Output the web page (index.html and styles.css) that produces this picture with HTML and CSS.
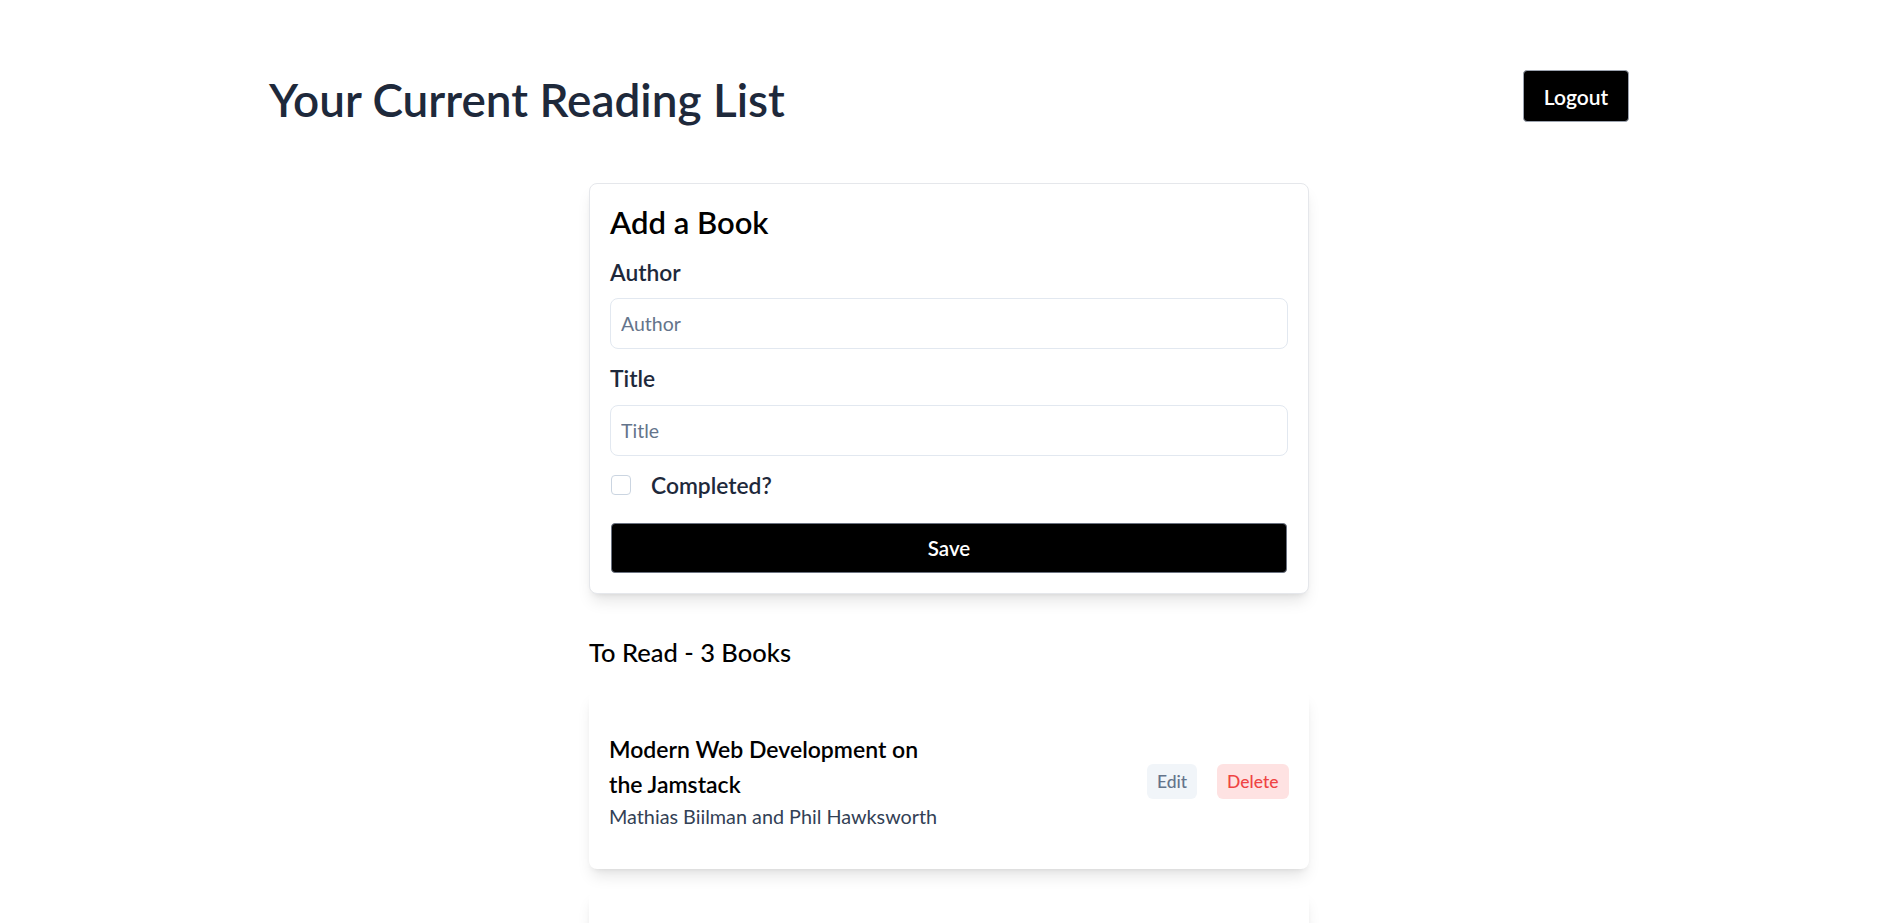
FILE: index.html
```html
<!DOCTYPE html>
<html lang="en">
<head>
<meta charset="utf-8">
<title>Your Current Reading List</title>
<link rel="stylesheet" href="styles.css">
</head>
<body>
<div class="container">
  <header class="header">
    <h1 class="page-title">Your Current Reading List</h1>
    <button class="btn-logout" type="button">Logout</button>
  </header>

  <main class="main">
    <form class="card add-card">
      <h2 class="card-title">Add a Book</h2>
      <div class="field">
        <label class="label" for="author">Author</label>
        <input class="input" id="author" type="text" placeholder="Author">
      </div>
      <div class="field">
        <label class="label" for="title">Title</label>
        <input class="input" id="title" type="text" placeholder="Title">
      </div>
      <div class="check-row">
        <input class="checkbox" id="completed" type="checkbox">
        <label class="label" for="completed">Completed?</label>
      </div>
      <button class="btn-save" type="button">Save</button>
    </form>

    <h3 class="section-title">To Read - 3 Books</h3>

    <ul class="book-list">
      <li class="book-card">
        <div class="book-info">
          <p class="book-title">Modern Web Development on the Jamstack</p>
          <p class="book-author">Mathias Biilman and Phil Hawksworth</p>
        </div>
        <div class="book-actions">
          <button class="btn-edit" type="button">Edit</button>
          <button class="btn-delete" type="button">Delete</button>
        </div>
      </li>
      <li class="book-card">
        <div class="book-info">
          <p class="book-title">Working in Public</p>
          <p class="book-author">Nadia Eghbal</p>
        </div>
        <div class="book-actions">
          <button class="btn-edit" type="button">Edit</button>
          <button class="btn-delete" type="button">Delete</button>
        </div>
      </li>
      <li class="book-card">
        <div class="book-info">
          <p class="book-title">Refactoring UI</p>
          <p class="book-author">Adam Wathan and Steve Schoger</p>
        </div>
        <div class="book-actions">
          <button class="btn-edit" type="button">Edit</button>
          <button class="btn-delete" type="button">Delete</button>
        </div>
      </li>
    </ul>
  </main>
</div>
</body>
</html>
```
FILE: styles.css
```css
* { box-sizing: border-box; }
html, body { margin: 0; padding: 0; background: #fff; }
body {
  font-family: Lato, "Noto Sans", sans-serif;
  color: #000;
}
.container {
  width: 1360px;
  margin: 0 auto;
  padding-top: 70px;
}
.header {
  display: flex;
  justify-content: space-between;
  align-items: flex-start;
}
.page-title {
  margin: 2px 0 2px;
  font-size: 45.9px;
  font-weight: 600;
  line-height: 55.2px;
  color: #1e293b;
}
.btn-logout {
  width: 106px;
  height: 52px;
  background: #000;
  color: #fff;
  border: 1px solid #9ca3af;
  border-radius: 4px;
  font-family: inherit;
  font-size: 21px;
  font-weight: 600;
  padding: 0;
}
.main {
  width: 720px;
  margin: 0 auto;
  padding-top: 54px;
}
.card {
  background: #fff;
  border: 1px solid #e5e7eb;
  border-radius: 8px;
  box-shadow: 0 10px 15px -3px rgba(0,0,0,.1), 0 4px 6px -4px rgba(0,0,0,.1);
}
.add-card {
  padding: 20px;
  display: flex;
  flex-direction: column;
}
.card-title {
  margin: 0 0 16px;
  font-size: 31px;
  font-weight: 600;
  line-height: 37.5px;
  color: #000;
}
.field {
  display: flex;
  flex-direction: column;
  margin-bottom: 15px;
}
.label {
  font-size: 22.8px;
  font-weight: 600;
  line-height: 28px;
  color: #1e293b;
}
.field .label { margin-bottom: 12.5px; }
.input {
  height: 51px;
  border: 1px solid #e2e8f0;
  border-radius: 8px;
  padding: 0 10px;
  font-family: inherit;
  font-size: 19.5px;
  color: #1e293b;
  outline: none;
}
.input::placeholder { color: #64748b; }
.check-row {
  display: flex;
  align-items: center;
  gap: 20px;
  height: 28px;
  margin-bottom: 24px;
}
.checkbox {
  appearance: none;
  -webkit-appearance: none;
  width: 20px;
  height: 20px;
  margin: 0 0 0 1px;
  border: 1px solid #cbd5e1;
  border-radius: 4px;
  background: #fff;
}
.btn-save {
  height: 50px;
  margin: 0 1px;
  background: #000;
  color: #fff;
  border: 1px solid #6b7280;
  border-radius: 4px;
  font-family: inherit;
  font-size: 20.5px;
  font-weight: 600;
}
.section-title {
  margin: 40px 0 0;
  font-size: 25.5px;
  font-weight: 500;
  line-height: 37.5px;
  color: #000;
}
.book-list {
  list-style: none;
  margin: 20px 0 0;
  padding: 0;
  display: flex;
  flex-direction: column;
  gap: 22px;
}
.book-card {
  display: flex;
  justify-content: space-between;
  align-items: center;
  padding: 41px 20px 38px;
  background: #fff;
  border-radius: 8px;
  box-shadow: 0 10px 15px -3px rgba(0,0,0,.1), 0 4px 6px -4px rgba(0,0,0,.1);
}
.book-info { width: 336px; }
.book-title {
  margin: 0;
  font-size: 23px;
  font-weight: 600;
  line-height: 35px;
  color: #000;
}
.book-author {
  margin: 0;
  font-size: 19.8px;
  line-height: 29px;
  color: #334155;
}
.book-actions {
  display: flex;
  gap: 20px;
}
.btn-edit, .btn-delete {
  height: 35px;
  border: none;
  border-radius: 6px;
  font-family: inherit;
  font-size: 17.5px;
  font-weight: 500;
}
.btn-edit { background: #f1f5f9; color: #64748b; padding: 0 9.5px; }
.btn-delete { background: #fee2e2; color: #ef4444; padding: 0 10.5px; }
```
